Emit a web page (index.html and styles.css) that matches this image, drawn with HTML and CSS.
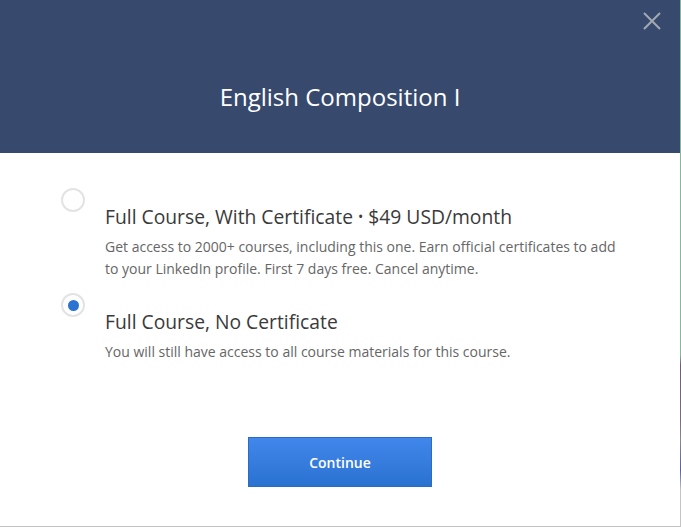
FILE: index.html
```html
<!DOCTYPE html>
<html>
<head>
<meta charset="utf-8">
<link rel="stylesheet" href="styles.css">
</head>
<body>
<div class="modal">
  <header class="modal-header">
    <h1 class="modal-title">English Composition I</h1>
    <button class="close" aria-label="Close">
      <svg width="20" height="20" viewBox="0 0 20 20"><path d="M2 2 L18 18 M18 2 L2 18" stroke="#a3a9b4" stroke-width="2" fill="none"/></svg>
    </button>
  </header>
  <div class="modal-body">
    <div class="option">
      <span class="radio"></span>
      <div class="option-text">
        <div class="option-title">Full Course, With Certificate <span class="dot">•</span> $49 USD/month</div>
        <p class="option-desc">Get access to 2000+ courses, including this one. Earn official certificates to add to your LinkedIn profile. First 7 days free. Cancel anytime.</p>
      </div>
    </div>
    <div class="option">
      <span class="radio checked"></span>
      <div class="option-text">
        <div class="option-title">Full Course, No Certificate</div>
        <p class="option-desc">You will still have access to all course materials for this course.</p>
      </div>
    </div>
    <div class="actions">
      <button class="continue">Continue</button>
    </div>
  </div>
</div>
</body>
</html>
```
FILE: styles.css
```css
html {
  background: linear-gradient(to bottom, #86b99c 0, #86b99c 355px, #6f5d75 365px, #7a6b7e 420px, #8a8a8a 440px, #5a5f9a 470px, #c4c4c4 490px, #c4c4c4 100%);
}
body {
  margin: 0;
  width: 681px;
  height: 527px;
  overflow: hidden;
  font-family: "Open Sans", "DejaVu Sans", sans-serif;
}
.modal {
  width: 680px;
  height: 526px;
  background: #fff;
  border-bottom: 1px solid #c2c2c2;
  display: flex;
  flex-direction: column;
}
.modal-header {
  position: relative;
  height: 153px;
  background: #374a6e;
  box-sizing: border-box;
  padding-top: 79px;
}
.modal-title {
  margin: 0;
  text-align: center;
  color: #fff;
  font-weight: 400;
  font-size: 24px;
  line-height: 36px;
}
.close {
  position: absolute;
  top: 11px;
  right: 18px;
  background: none;
  border: 0;
  padding: 0;
  width: 20px;
  height: 20px;
}
.close svg { display: block; }
.modal-body {
  padding: 35px 0 0 61px;
}
.option {
  display: flex;
  gap: 20px;
  margin-bottom: 13px;
}
.radio {
  flex: none;
  width: 24px;
  height: 24px;
  box-sizing: border-box;
  border: 2px solid #e3e3e3;
  border-radius: 50%;
  display: flex;
  align-items: center;
  justify-content: center;
}
.radio.checked::after {
  content: "";
  width: 11px;
  height: 11px;
  border-radius: 50%;
  background: #2a73d1;
}
.option-text {
  padding-top: 17px;
}
.option-title {
  font-size: 19.3px;
  line-height: 24px;
  color: #3a3a3a;
  margin-bottom: 7px;
}
.dot { font-size: 14px; vertical-align: 2px; }
.option-desc {
  margin: 0;
  font-size: 14px;
  line-height: 22px;
  color: #666;
  width: 520px;
}
.actions {
  display: flex;
  justify-content: center;
  margin: 74px 0 0 -61px;
}
.continue {
  width: 184px;
  height: 50px;
  border: 1px solid #2a6cc4;
  background: linear-gradient(to bottom, #4287ec, #2a72d0);
  color: #fff;
  font-family: "Open Sans", sans-serif;
  font-weight: 600;
  font-size: 14px;
  padding: 0;
}
```
